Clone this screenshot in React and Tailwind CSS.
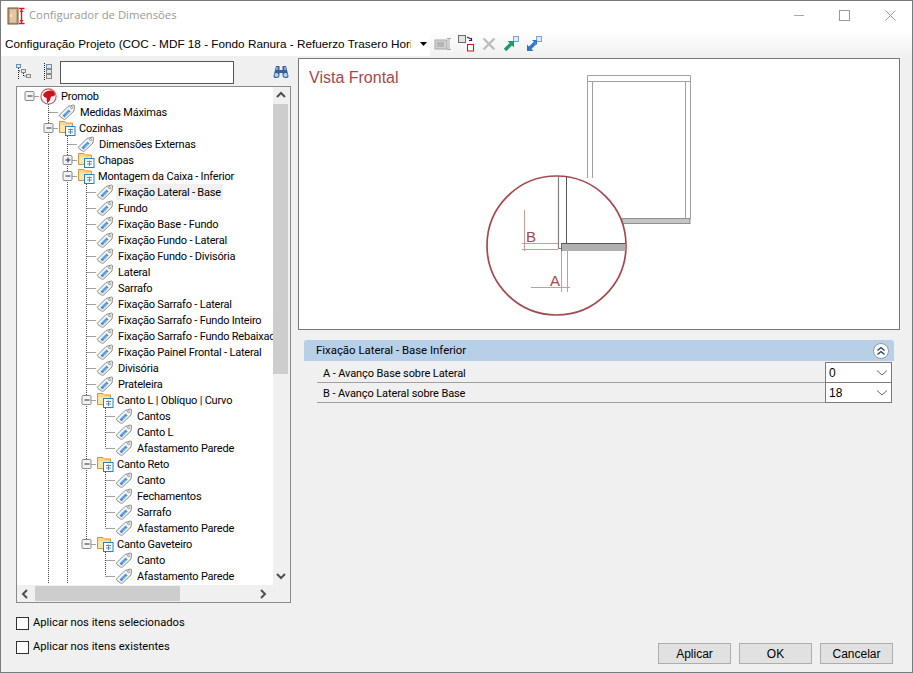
import React from "react";

const SANS = "font-['Liberation_Sans',Arial,sans-serif]";
const ROBOTO = "font-['Roboto',Arial,sans-serif]";

function Tag() {
  return (
    <svg width="18" height="16" viewBox="0 0 18 16" className="shrink-0">
      <path d="M1.5 11 L10 2.5 L15.5 1 L16.5 1.5 L16 7 L7.5 15 Q6.5 15.5 5.5 15 L2 12.5 Q1 12 1.5 11Z" fill="#f4f4f4" stroke="#8a8a8a" />
      <circle cx="13.5" cy="3.6" r="1" fill="#fff" stroke="#777" strokeWidth=".8" />
      <path d="M4.5 11.5 L10.5 5.5 L12.5 7.5 L6.5 13.5Z" fill="#3f8fdc" />
      <path d="M6 10.5 L10 6.5 M7.5 11.5 L11 8" stroke="#a8d4f5" strokeWidth=".7" />
    </svg>
  );
}

function Folder() {
  return (
    <svg width="18" height="16" viewBox="0 0 18 16" className="shrink-0">
      <path d="M1.5 1.5 H7 L8.5 3 H14.5 V12.5 H1.5Z" fill="#f8d98c" stroke="#c99a45" />
      <path d="M2.5 5 H14 V12 H2.5Z" fill="#fbe6ae" />
      <rect x="7.5" y="6.5" width="9.5" height="9" fill="#fff" stroke="#1f84c8" />
      <path d="M10 9.5 H15 M10 12 H15 M12.5 8.5 V14" stroke="#5a8fb8" strokeWidth="1" />
    </svg>
  );
}

function Logo() {
  return (
    <svg width="17" height="17" viewBox="0 0 17 17" className="ml-px shrink-0">
      <circle cx="8.5" cy="8.5" r="7.6" fill="#fff" stroke="#e0545a" strokeWidth="1.2" />
      <path d="M4 5 Q7 2 11 2.6 Q15 3.4 15 7 Q13.5 9 11 8.5 L10 12 Q8.5 15 7 15 L6.5 10 Q3.5 9.5 3 7Z" fill="#c8141e" />
    </svg>
  );
}

function Expander({ x, plus }) {
  return (
    <g>
      <rect x={x - 4.5} y="3.5" width="9" height="9" rx="1" fill="#f2f2f2" stroke="#8a8a8a" />
      <path d={`M${x - 2} 8 H${x + 3}`} stroke="#20304f" />
      {plus && <path d={`M${x + 0.5} 5.5 V10.5`} stroke="#20304f" />}
    </g>
  );
}

const tree = {
  t: "Promob", kind: "logo", open: true, kids: [
    { t: "Medidas Máximas" },
    {
      t: "Cozinhas", kind: "folder", open: true, more: true, kids: [
        { t: "Dimensões Externas" },
        { t: "Chapas", kind: "folder", plus: true },
        {
          t: "Montagem da Caixa - Inferior", kind: "folder", open: true, more: true, kids: [
            { t: "Fixação Lateral - Base", sel: true },
            { t: "Fundo" },
            { t: "Fixação Base - Fundo" },
            { t: "Fixação Fundo - Lateral" },
            { t: "Fixação Fundo - Divisória" },
            { t: "Lateral" },
            { t: "Sarrafo" },
            { t: "Fixação Sarrafo - Lateral" },
            { t: "Fixação Sarrafo - Fundo Inteiro" },
            { t: "Fixação Sarrafo - Fundo Rebaixado" },
            { t: "Fixação Painel Frontal - Lateral" },
            { t: "Divisória" },
            { t: "Prateleira" },
            { t: "Canto L | Oblíquo | Curvo", kind: "folder", open: true, kids: [{ t: "Cantos" }, { t: "Canto L" }, { t: "Afastamento Parede" }] },
            { t: "Canto Reto", kind: "folder", open: true, kids: [{ t: "Canto" }, { t: "Fechamentos" }, { t: "Sarrafo" }, { t: "Afastamento Parede" }] },
            { t: "Canto Gaveteiro", kind: "folder", open: true, kids: [{ t: "Canto" }, { t: "Afastamento Parede" }] },
          ],
        },
      ],
    },
  ],
};

function flatten(node, depth, guides, last, out) {
  out.push({ ...node, depth, guides, last });
  if (node.kids) {
    node.kids.forEach((k, i) => {
      const isLast = i === node.kids.length - 1 && !k.more;
      const g = depth === 0 ? [] : [...guides, !last];
      flatten(k, depth + 1, g, isLast, out);
    });
  }
  return out;
}

const rows = flatten(tree, 0, [], true, []);
const X = (k) => 12.5 + 19 * k;

function TreeRow({ r }) {
  const w = 22 + 19 * r.depth;
  const hasExp = r.open || r.plus;
  const cols = [];
  r.guides.forEach((on, i) => {
    if (on) cols.push(i + 1);
  });
  return (
    <div className="flex h-4 items-center whitespace-nowrap">
      <svg width={w} height="16" viewBox={`0 0 ${w} 16`} className="shrink-0">
        {cols.map((k) => (
          <path key={k} d={`M${X(k)} 0 V16`} stroke="#444" strokeDasharray="1 1" />
        ))}
        {r.depth > 0 && (
          <path d={`M${X(r.depth)} 0 V${r.last ? 8 : 16}`} stroke="#444" strokeDasharray="1 1" />
        )}
        <path d={`M${X(r.depth)} 8.5 H${w}`} stroke="#444" strokeDasharray="1 1" />
        {hasExp && <Expander x={X(r.depth)} plus={r.plus} />}
      </svg>
      <span className="flex w-[20px] shrink-0 justify-start">
        {r.kind === "folder" ? <Folder /> : r.kind === "logo" ? <Logo /> : <Tag />}
      </span>
      <span className={`h-4 px-0.5 pt-[2px] leading-[14px] ${r.kind === "folder" ? "-ml-px" : ""} ${r.sel ? "bg-[#f0f0f0]" : ""}`}>{r.t}</span>
    </div>
  );
}

function Chevron({ dir }) {
  const d = {
    up: "M1 6 L5 2 L9 6",
    down: "M1 2 L5 6 L9 2",
    left: "M6 1 L2 5 L6 9",
    right: "M2 1 L6 5 L2 9",
  }[dir];
  return (
    <svg width="10" height="10" viewBox="0 0 10 10" className="shrink-0">
      <path d={d} fill="none" stroke="#505050" strokeWidth="2" />
    </svg>
  );
}

function TitleIcon() {
  return (
    <svg width="20" height="18" viewBox="0 0 20 18" className="shrink-0">
      <rect x="1" y="1" width="10" height="16" fill="#c9a67c" stroke="#6e5136" />
      <rect x="3" y="2.5" width="6" height="13" fill="#e0c6a2" />
      <rect x="3.5" y="7" width="1" height="3" fill="#fff" />
      <path d="M14.5 2 V16" stroke="#e81123" strokeWidth="1.4" />
      <path d="M12 1.5 H17.5 M12 16.5 H17.5" stroke="#e81123" strokeWidth="1.4" />
      <path d="M12.5 5 L14.5 2.5 L16.5 5Z M12.5 13 L14.5 15.5 L16.5 13Z" fill="#e81123" />
    </svg>
  );
}

function Tools() {
  return (
    <div className="flex items-center">
      <svg width="18" height="14" viewBox="0 0 18 14" className="ml-[4px]">
        <rect x="1" y="3" width="12" height="9" fill="#d0d0d0" stroke="#a8a8a8" />
        <rect x="3" y="5" width="7" height="5" fill="#b4b4b4" />
        <path d="M13 1.5 H17 M15 1.5 V12.5 M13 12.5 H17" stroke="#a8a8a8" />
      </svg>
      <svg width="18" height="18" viewBox="0 0 18 18" className="ml-[6px]">
        <rect x="0.5" y="0.5" width="7" height="7" fill="#e4e4e4" stroke="#6a6a6a" />
        <rect x="9.5" y="9.5" width="6" height="6.5" fill="#fff" stroke="#d0101c" />
        <path d="M9 2 L13 4 M11 5.5 H13.5 V3" fill="none" stroke="#1a2a6a" strokeWidth="1.2" />
      </svg>
      <svg width="14" height="14" viewBox="0 0 14 14" className="ml-[6px]">
        <path d="M1.5 1.5 L12.5 12.5 M12.5 1.5 L1.5 12.5" stroke="#bdbdbd" strokeWidth="2.4" />
      </svg>
      <svg width="16" height="16" viewBox="0 0 16 16" className="ml-[7px]">
        <rect x="10.5" y="0.5" width="5" height="5" fill="#dfeaf7" stroke="#7aa2d8" />
        <path d="M2 14 L8 8" stroke="#1c9a70" strokeWidth="3.4" />
        <path d="M4.5 5 L11 5 L11 11.5Z" fill="#1c9a70" />
      </svg>
      <svg width="16" height="16" viewBox="0 0 16 16" className="ml-[7px]">
        <rect x="10.5" y="0.5" width="5" height="5" fill="#dfeaf7" stroke="#7aa2d8" />
        <path d="M4 12 L9 7" stroke="#2f74d0" strokeWidth="3.4" />
        <path d="M1 15 L1 8.5 L7.5 15Z" fill="#2f74d0" />
        <path d="M6 4 L11 4 L11 9Z" fill="#2f74d0" />
      </svg>
    </div>
  );
}

function TreeTools() {
  return (
    <>
      <svg width="16" height="18" viewBox="0 0 16 18" className="shrink-0">
        <rect x="0.5" y="1.5" width="4" height="3" fill="#dfe6ee" stroke="#6b8fb6" />
        <rect x="5.5" y="6.5" width="4" height="3" fill="#e6e6e6" stroke="#8a8a8a" />
        <rect x="10.5" y="11.5" width="4" height="3" fill="#e6e6e6" stroke="#8a8a8a" />
        <path d="M2.5 5 V17 M3 8 H5 M7.5 10 V13 H10" stroke="#222" strokeDasharray="1 1" fill="none" />
      </svg>
      <svg width="10" height="18" viewBox="0 0 10 18" className="ml-[11px] shrink-0">
        <path d="M1.5 0 V17" stroke="#222" strokeDasharray="1 1" />
        <rect x="3.5" y="1.5" width="5" height="4" fill="#dfe6ee" stroke="#6b8fb6" />
        <rect x="3.5" y="6.5" width="5" height="4" fill="#e6e6e6" stroke="#8a8a8a" />
        <rect x="3.5" y="11.5" width="5" height="4" fill="#e6e6e6" stroke="#8a8a8a" />
      </svg>
    </>
  );
}

function Binoculars() {
  return (
    <svg width="16" height="14" viewBox="0 0 16 14" className="block">
      <path d="M3 1 H6.5 V5 H9.5 V1 H13 L15.5 11 Q15.5 13 12.5 13 Q9.5 13 9.5 10 V8 H6.5 V10 Q6.5 13 3.5 13 Q0.5 13 0.5 11Z" fill="#35619f" />
      <path d="M4 2 V5 M12 2 V5" stroke="#d8e6f6" />
      <circle cx="3.5" cy="10" r="2" fill="#b6d2ee" />
      <circle cx="12.5" cy="10" r="2" fill="#b6d2ee" />
    </svg>
  );
}

function Drawing() {
  const red = "#a5484d";
  const pale = "#cc9a98";
  return (
    <svg width="600" height="270" viewBox="299 59 600 270" className="block">
      <g fill="none" stroke="#a0a0a0">
        <path d="M587.5 178 V75.5 H690.5 V219" />
        <path d="M592.5 178 V81.5 H685.5 V219" />
        <path d="M587.5 81.5 H592.5 M685.5 81.5 H690.5" />
      </g>
      <rect x="622" y="218.5" width="68" height="5" fill="#c4c4c4" stroke="#909090" strokeWidth="1" />
      <circle cx="556.5" cy="245.5" r="69.5" fill="#fff" stroke={red} strokeWidth="1.7" />
      <path d="M558.5 177 V248.5 H561" fill="none" stroke="#808080" strokeWidth="1.2" />
      <path d="M566.5 177 V243" fill="none" stroke="#555" />
      <rect x="561" y="243" width="64.5" height="8" fill="#b0b0b0" />
      <path d="M561 243.5 H625.5" stroke="#555" />
      <path d="M561.5 243 V251" stroke="#666" />
      <g fill="none" stroke={pale}>
        <path d="M524.5 210 V251" />
        <path d="M522 243.5 H558" />
        <path d="M522 249.5 H558" />
        <path d="M531 287.5 H570" />
        <path d="M561.5 251 V292" />
        <path d="M567.5 251 V292" />
      </g>
      <text x="526" y="241.5" fontSize="15" fill={red} style={{ fontFamily: "'Liberation Sans',Arial,sans-serif" }}>B</text>
      <text x="550" y="286" fontSize="15" fill={red} style={{ fontFamily: "'Liberation Sans',Arial,sans-serif" }}>A</text>
    </svg>
  );
}

function PropRow({ label, value }) {
  return (
    <div className="flex h-[20px] border-b border-[#a0a0a0]">
      <div className={`${ROBOTO} flex-1 pl-[6px] text-[11px] leading-[21px] tracking-[-0.1px]`}>{label}</div>
      <div className="-mt-px flex h-[21px] w-[67px] items-center justify-between border border-[#7a7a7a] bg-white pl-[3px] pr-[3px]">
        <span>{value}</span>
        <svg width="12" height="8" viewBox="0 0 12 8"><path d="M1 1.5 L6 6 L11 1.5" fill="none" stroke="#666" /></svg>
      </div>
    </div>
  );
}

function Check({ label }) {
  return (
    <label className="flex h-[13px] items-center">
      <span className="h-[13px] w-[13px] shrink-0 border border-[#333] bg-white" />
      <span className={`${ROBOTO} ml-[4px] text-[11.2px]`}>{label}</span>
    </label>
  );
}

function Btn({ children }) {
  return (
    <button className="h-[21px] w-[73px] border border-[#adadad] bg-[#e1e1e1] text-center text-[12px] text-black">
      {children}
    </button>
  );
}

export default function App() {
  return (
    <div className={`${SANS} flex h-[673px] w-[913px] flex-col overflow-hidden border border-[#7a7a7a] bg-[#f0f0f0] text-[12px] text-black`}>
      {/* Title bar */}
      <div className="flex h-[29px] shrink-0 items-center bg-white pl-[6px]">
        <TitleIcon />
        <span className="ml-[2px] font-['Open_Sans',sans-serif] text-[11.3px] text-[#999]">Configurador de Dimensões</span>
        <div className="ml-auto flex items-center">
          <svg width="11" height="11" viewBox="0 0 11 11" className="mr-[34px]"><path d="M0 5.5 H10" stroke="#aaa" /></svg>
          <svg width="11" height="11" viewBox="0 0 11 11" className="mr-[35px]"><rect x="0.5" y="0.5" width="10" height="10" fill="none" stroke="#999" /></svg>
          <svg width="11" height="11" viewBox="0 0 11 11" className="mr-[16px]"><path d="M0.5 0.5 L10.5 10.5 M10.5 0.5 L0.5 10.5" stroke="#999" /></svg>
        </div>
      </div>

      {/* Toolbar */}
      <div className="flex h-[28px] shrink-0 items-center bg-gradient-to-b from-white to-[#f0f0f0]">
        <div className="flex h-[24px] w-[429px] shrink-0 items-center bg-white pl-[4px]">
          <span className="w-[406px] overflow-hidden whitespace-nowrap text-[11.75px]">Configuração Projeto (COC - MDF 18 - Fondo Ranura - Refuerzo Trasero Horizontal</span>
          <svg width="8" height="4" viewBox="0 0 8 4" className="ml-[9px]"><path d="M0 0 H7 L3.5 4Z" fill="#000" /></svg>
        </div>
        <Tools />
      </div>

      {/* Body */}
      <div className="flex min-h-0 flex-1">
        {/* Left column */}
        <div className="flex w-[297px] shrink-0 flex-col pl-[15px] pr-[7px]">
          <div className="flex h-[28px] shrink-0 items-center">
            <TreeTools />
            <input readOnly className="ml-[7px] h-[23px] w-[174px] border border-[#555] bg-white" />
            <span className="ml-auto mr-[2px]"><Binoculars /></span>
          </div>
          <div className="flex h-[517px] flex-col border border-[#8a8a8a] bg-[#f0f0f0]">
            <div className="flex min-h-0 flex-1">
              <div className={`${ROBOTO} min-w-0 flex-1 overflow-hidden bg-white pt-px text-[11px] tracking-[-0.2px]`}>
                {rows.map((r, i) => <TreeRow key={i} r={r} />)}
              </div>
              <div className="flex w-[17px] shrink-0 flex-col">
                <div className="flex h-[17px] w-[15px] items-center justify-center"><Chevron dir="up" /></div>
                <div className="flex-1"><div className="h-[270px] w-[15px] bg-[#cdcdcd]" /></div>
                <div className="flex h-[17px] w-[15px] items-center justify-center"><Chevron dir="down" /></div>
              </div>
            </div>
            <div className="flex h-[17px] shrink-0 items-center pr-[17px]">
              <div className="flex w-[18px] shrink-0 items-center justify-center"><Chevron dir="left" /></div>
              <div className="min-w-0 flex-1"><div className="h-[15px] w-[145px] bg-[#cdcdcd]" /></div>
              <div className="flex w-[18px] shrink-0 items-center justify-center"><Chevron dir="right" /></div>
            </div>
          </div>
          <div className="mt-[14px] flex flex-col gap-[11px]">
            <Check label="Aplicar nos itens selecionados" />
            <Check label="Aplicar nos itens existentes" />
          </div>
        </div>

        {/* Right column */}
        <div className="flex min-w-0 flex-1 flex-col pr-[12px]">
          <div className="relative h-[272px] shrink-0 border border-[#777] bg-white">
            <span className="absolute left-[10px] top-[9px] text-[16px] leading-5 text-[#a5484d]">Vista Frontal</span>
            <Drawing />
          </div>
          <div className="ml-[6px] mr-[6px] mt-[10px] flex h-[21px] items-center justify-between rounded-t-[3px] bg-[#b8cfe8] pl-[12px] pr-[5px]">
            <span className={`${ROBOTO} text-[11.4px]`}>Fixação Lateral - Base Inferior</span>
            <span className="flex h-[16px] w-[16px] items-center justify-center rounded-full border border-[#9a9a9a] bg-white">
              <svg width="10" height="10" viewBox="0 0 10 10"><path d="M1.5 4.5 L5 1.5 L8.5 4.5 M1.5 8.5 L5 5.5 L8.5 8.5" fill="none" stroke="#1f3a6a" strokeWidth="1.3" /></svg>
            </span>
          </div>
          <div className="ml-[19px] mr-[8px] mt-[2px] flex flex-col">
            <PropRow label="A - Avanço Base sobre Lateral" value="0" />
            <PropRow label="B - Avanço Lateral sobre Base" value="18" />
          </div>
          <div className="mb-[8px] mt-auto flex justify-end gap-[8px] pr-[7px]">
            <Btn>Aplicar</Btn>
            <Btn>OK</Btn>
            <Btn>Cancelar</Btn>
          </div>
        </div>
      </div>
    </div>
  );
}
